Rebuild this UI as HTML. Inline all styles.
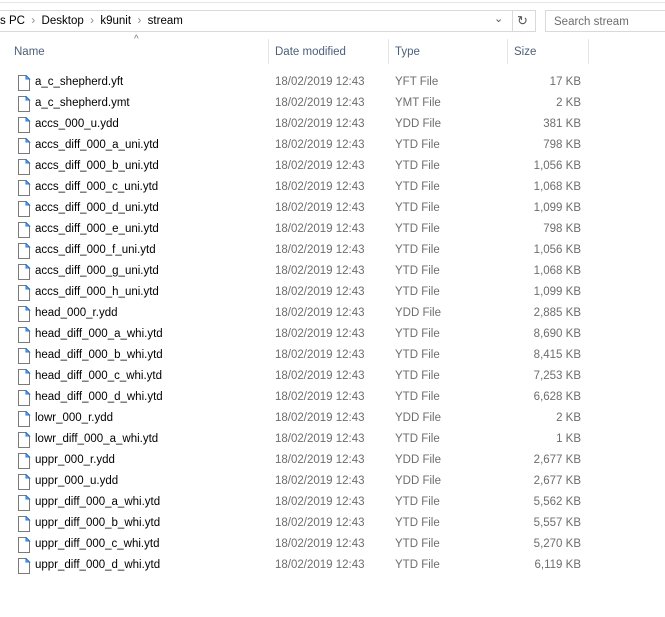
<!DOCTYPE html>
<html><head><style>
*{margin:0;padding:0;box-sizing:border-box}
body{width:665px;height:617px;background:#fff;font-family:"Liberation Sans",sans-serif;font-size:11.5px;color:#000;position:relative;overflow:hidden}
.a{position:absolute;white-space:nowrap}
.topline{left:0;top:2px;width:665px;height:1px;background:#e5e5e5}
.addr{left:-1px;top:10px;width:537px;height:22px;border:1px solid #d9d9d9}
.sep{left:512px;top:11px;width:1px;height:20px;background:#d9d9d9}
.search{left:545px;top:10px;width:125px;height:22px;border:1px solid #d9d9d9;color:#6d6d6d;padding:5px 0 0 8px}
.hd{color:#4c607a;top:46px}
.vd{top:39px;width:1px;height:25px;background:#e5e5e5}
.row{left:0;height:21px;width:665px}
.row span{position:absolute;top:4px}
.n{left:35px}
.d{left:275px;color:#6d6d6d}
.t{left:395px;color:#6d6d6d}
.s{right:84px;color:#6d6d6d}
.row svg{position:absolute;left:17px;top:3px}
</style></head><body>
<div class="a topline"></div>
<div class="a addr"></div>
<div class="a" style="left:0;top:15px">s PC &nbsp;<span style="color:#888">›</span>&nbsp; Desktop &nbsp;<span style="color:#888">›</span>&nbsp; k9unit &nbsp;<span style="color:#888">›</span>&nbsp; stream</div>
<div class="a" style="left:494px;top:12px;color:#555;font-size:11px">⌄</div>
<div class="a sep"></div>
<div class="a" style="left:517px;top:13px;color:#555;font-size:13px">↻</div>
<div class="a search">Search stream</div>
<div class="a" style="left:134px;top:34px;color:#777;font-size:10px">^</div>
<div class="a hd" style="left:14px">Name</div>
<div class="a hd" style="left:275px">Date modified</div>
<div class="a hd" style="left:395px">Type</div>
<div class="a hd" style="left:514px">Size</div>
<div class="a vd" style="left:268px"></div>
<div class="a vd" style="left:388px"></div>
<div class="a vd" style="left:507px"></div>
<div class="a vd" style="left:588px"></div>
<div id="rows"></div>
<script>
var r=[["a_c_shepherd.yft","YFT File","17 KB"],["a_c_shepherd.ymt","YMT File","2 KB"],["accs_000_u.ydd","YDD File","381 KB"],["accs_diff_000_a_uni.ytd","YTD File","798 KB"],["accs_diff_000_b_uni.ytd","YTD File","1,056 KB"],["accs_diff_000_c_uni.ytd","YTD File","1,068 KB"],["accs_diff_000_d_uni.ytd","YTD File","1,099 KB"],["accs_diff_000_e_uni.ytd","YTD File","798 KB"],["accs_diff_000_f_uni.ytd","YTD File","1,056 KB"],["accs_diff_000_g_uni.ytd","YTD File","1,068 KB"],["accs_diff_000_h_uni.ytd","YTD File","1,099 KB"],["head_000_r.ydd","YDD File","2,885 KB"],["head_diff_000_a_whi.ytd","YTD File","8,690 KB"],["head_diff_000_b_whi.ytd","YTD File","8,415 KB"],["head_diff_000_c_whi.ytd","YTD File","7,253 KB"],["head_diff_000_d_whi.ytd","YTD File","6,628 KB"],["lowr_000_r.ydd","YDD File","2 KB"],["lowr_diff_000_a_whi.ytd","YTD File","1 KB"],["uppr_000_r.ydd","YDD File","2,677 KB"],["uppr_000_u.ydd","YDD File","2,677 KB"],["uppr_diff_000_a_whi.ytd","YTD File","5,562 KB"],["uppr_diff_000_b_whi.ytd","YTD File","5,557 KB"],["uppr_diff_000_c_whi.ytd","YTD File","5,270 KB"],["uppr_diff_000_d_whi.ytd","YTD File","6,119 KB"]];
var h="";r.forEach(function(x,i){h+='<div class="a row" style="top:'+(72+i*21)+'px"><svg width="14" height="16" viewBox="0 0 14 16"><path d="M1.5 0.5H9L12.5 4V15.5H1.5Z" fill="#fff" stroke="#7a7a7a"/><path d="M9 0.5V4H12.5Z" fill="#8fc0ef" stroke="#1e73d2"/></svg><span class="n">'+x[0]+'</span><span class="d">18/02/2019 12:43</span><span class="t">'+x[1]+'</span><span class="s">'+x[2]+'</span></div>'});
document.getElementById("rows").innerHTML=h;
</script>
</body></html>
